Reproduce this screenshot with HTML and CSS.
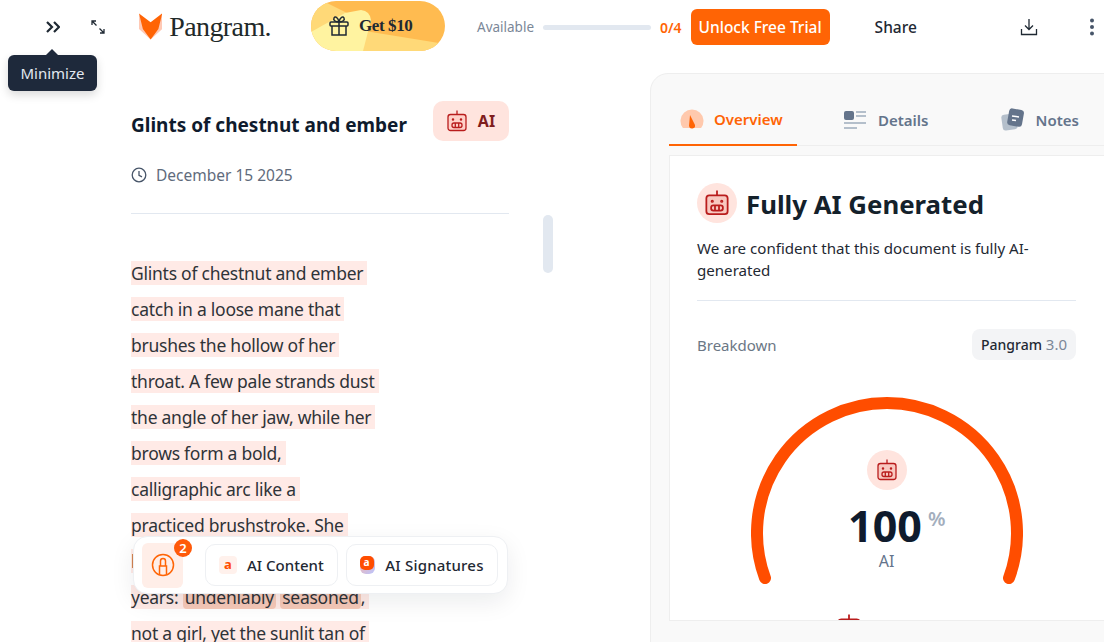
FILE: index.html
```html
<!DOCTYPE html>
<html lang="en">

<head>
    <meta charset="UTF-8">
    <meta name="viewport" content="width=device-width, initial-scale=1.0">
    <title>Pangram - Glints of chestnut and ember</title>
    <link rel="stylesheet" href="styles.css">
</head>

<body>

    <header class="topbar">
        <button class="icon-btn collapse" aria-label="Minimize">
            <svg width="14" height="12" viewBox="0 0 14 12" fill="none" stroke="#1f2933" stroke-width="2.2"><path d="M1 1l5 5-5 5M8 1l5 5-5 5"/></svg>
        </button>
        <button class="icon-btn expand" aria-label="Expand">
            <svg width="14" height="14" viewBox="0 0 14 14" fill="none" stroke="#1f2933" stroke-width="1.3"><path d="M1 5V1h4M1 1l4.500 4.500M13 9v4H9M13 13L8.500 8.500"/></svg>
        </button>
        <div class="logo">
            <svg width="24" height="27" viewBox="0 0 24 27"><path fill="#ffc9b5" d="M0 1l12 26L0 16zM24 1L12 27l12-11z"/><path fill="#ff6405" d="M0 0l12 9 12-9-4 16-8 11-8-11z"/></svg>
            <span class="logo-name">Pangram.</span>
        </div>
        <a class="promo">
            <svg class="promo-bg" width="134" height="50" viewBox="0 0 134 50"><rect width="134" height="50" fill="#ffbb50"/><path fill="#ffd978" d="M0 0h12l24 12L0 32z"/><path fill="#ffd978" d="M54 30l80 13v7H50z"/><path fill="#fff3a0" d="M0 31l34-19 16-3q9 1 10 10l-8 31H0z"/></svg>
            <svg class="promo-gift" width="20" height="20" viewBox="0 0 20 20" fill="none" stroke="#1f2933" stroke-width="1.500"><rect x="1" y="6" width="18" height="4" rx="1"/><path d="M3 10v9h14v-9M10 6v13M10 6C6 6 4 4 5 2s4-1 5 4c1-5 4-6 5-4s-1 4-5 4"/></svg>
            <span>Get $10</span>
        </a>
        <span class="avail-label">Available</span>
        <span class="avail-bar"></span>
        <span class="avail-count">0/4</span>
        <button class="unlock">Unlock Free Trial</button>
        <button class="share">Share</button>
        <button class="icon-btn download" aria-label="Download">
            <svg width="18" height="18" viewBox="0 0 18 18" fill="none" stroke="#1f2933" stroke-width="1.300"><path d="M9 1v10M5 7.500L9 11.500l4-4M1.500 11v5.500h15V11"/></svg>
        </button>
        <button class="icon-btn more" aria-label="More">
            <svg width="6" height="18" viewBox="0 0 6 18" fill="#475569"><circle cx="3" cy="2.500" r="2"/><circle cx="3" cy="9" r="2"/><circle cx="3" cy="15.500" r="2"/></svg>
        </button>
    </header>

    <div class="tooltip">Minimize</div>

    <main class="content">
        <section class="doc">
            <div class="doc-head">
                <h1>Glints of chestnut and ember</h1>
                <span class="ai-chip">
                    <svg width="20" height="22" viewBox="0 0 20 22" fill="#ffd0c8" stroke="#b91c1c" stroke-width="1.300"><use href="#robot"/></svg>
                    AI
                </span>
            </div>
            <p class="doc-date">
                <svg width="16" height="16" viewBox="0 0 16 16" fill="none" stroke="#475569" stroke-width="1.300"><circle cx="8" cy="8" r="6.800"/><path d="M8 4v4.300l3 1.500"/></svg>
                December 15 2025
            </p>
            <hr class="rule">
            <div class="doc-text">
                <div><span class="hl">Glints of chestnut and ember</span></div>
                <div><span class="hl">catch in a loose mane that</span></div>
                <div><span class="hl">brushes the hollow of her</span></div>
                <div><span class="hl">throat. A few pale strands dust</span></div>
                <div><span class="hl">the angle of her jaw, while her</span></div>
                <div><span class="hl">brows form a bold,</span></div>
                <div><span class="hl">calligraphic arc like a</span></div>
                <div><span class="hl">practiced brushstroke. She</span></div>
                <div><span class="hl">looks lived in, her</span></div>
                <div><span class="hl">years: <mark>undeniably</mark> <mark>seasoned</mark>,</span></div>
                <div><span class="hl">not a girl, yet the sunlit tan of</span></div>
            </div>
        </section>

        <div class="doc-scroll"><span></span></div>

        <aside class="panel">
            <nav class="tabs">
                <a class="tab active">
                    <svg width="24" height="20" viewBox="0 0 24 20"><path fill="#ffc9ad" d="M2.900 19A11.500 11.500 0 1 1 21.100 19z"/><path fill="#ff6405" d="M10 6l5 10a3 3 0 1 1-6 1z"/></svg>
                    Overview
                </a>
                <a class="tab details">
                    <svg width="24" height="20" viewBox="0 0 24 20"><rect x="1" y="1" width="10" height="9" rx="2" fill="#64748b"/><path stroke="#b4bfcb" stroke-width="2" d="M13 2h10M13 6h10M1 13h22M1 18h13"/></svg>
                    Details
                </a>
                <a class="tab notes">
                    <svg width="24" height="24" viewBox="0 0 24 24"><rect x="1" y="6" width="15" height="16" rx="3" fill="#b4bfcb" transform="rotate(-8 8 14)"/><rect x="7" y="1" width="15" height="17" rx="3" fill="#64748b" transform="rotate(10 14 10)"/><path stroke="#fff" stroke-width="1.500" d="M11 8l7 1M11 12l4 .5"/></svg>
                    Notes
                </a>
            </nav>
            <div class="card">
                <div class="verdict">
                    <span class="robot-dot">
                        <svg width="24" height="26" viewBox="0 0 20 22" fill="#f8c8c0" stroke="#b91c1c" stroke-width="1.500"><use href="#robot"/></svg>
                    </span>
                    <h2>Fully AI Generated</h2>
                </div>
                <p class="verdict-text">We are confident that this document is fully AI-generated</p>
                <hr class="rule">
                <div class="breakdown">
                    <span>Breakdown</span>
                    <span class="model"><b>Pangram</b> 3.0</span>
                </div>
                <div class="gauge">
                    <svg class="gauge-arc" width="272" height="200" viewBox="0 0 272 200" fill="none"><path d="M14 182A130 130 0 1 1 258 182" stroke="#ff4d00" stroke-width="12" stroke-linecap="round"/></svg>
                    <span class="robot-dot">
                        <svg width="20" height="22" viewBox="0 0 20 22" fill="#f8c8c0" stroke="#b91c1c" stroke-width="1.300"><use href="#robot"/></svg>
                    </span>
                    <div class="gauge-num">100<sup>%</sup></div>
                    <div class="gauge-label">AI</div>
                </div>
                <div class="next-row">
                    <svg width="24" height="26" viewBox="0 0 20 22" fill="#f8c8c0" stroke="#b91c1c" stroke-width="1.500"><use href="#robot"/></svg>
                </div>
            </div>
        </aside>
    </main>

    <div class="floatbar">
        <button class="float-icon">
            <svg width="24" height="24" viewBox="0 0 24 24" fill="none" stroke="#ff6405" stroke-width="1.500"><circle cx="12" cy="12" r="10.500"/><path d="M8.500 21.500V13h7v8.500M9.500 13V8a2.500 2.500 0 0 1 5 0v5"/></svg>
            <span class="badge">2</span>
        </button>
        <button class="float-btn">
            <span class="a-mark">a</span>
            AI Content
        </button>
        <button class="float-btn signatures">
            <span class="a-stack"><span>a</span></span>
            AI Signatures
        </button>
    </div>

    <svg class="defs" width="0" height="0">
        <defs>
            <g id="robot">
                <rect x="1" y="4.500" width="18" height="16" rx="2.500"/>
                <path d="M10 0.500v4"/>
                <rect x="5" y="13" width="10" height="4.500" rx="2" fill="none"/>
                <path d="M8.300 13v4.500M11.700 13v4.500"/>
                <circle cx="6" cy="9.500" r=".6"/>
                <circle cx="14" cy="9.500" r=".6"/>
            </g>
        </defs>
    </svg>

</body>

</html>
```

FILE: styles.css
```css
* {
    box-sizing: border-box;
}

html,
body {
    margin: 0;
    height: 642px;
    overflow: hidden;
}

body {
    position: relative;
    display: flex;
    flex-direction: column;
    background: white;
    color: #1f2933;
    font-family: 'Noto Sans', sans-serif;
}

button {
    padding: 0;
    border: none;
    background: none;
    font-family: inherit;
    cursor: pointer;
}

.defs {
    position: absolute;
}

/* top bar */
.topbar {
    flex: none;
    display: flex;
    align-items: center;
    height: 54px;
    padding-left: 46px;
}

.icon-btn {
    display: flex;
    align-items: center;
}

.expand {
    margin-left: 31px;
}

.logo {
    display: flex;
    align-items: center;
    gap: 7px;
    width: 132px;
    margin-left: 34px;
    margin-top: -1px;
}

.logo-name {
    font-family: 'Liberation Serif', serif;
    font-size: 28px;
    letter-spacing: -0.6px;
    color: #1f2a2a;
}

.promo {
    position: relative;
    overflow: hidden;
    display: flex;
    align-items: center;
    gap: 10px;
    width: 134px;
    height: 50px;
    margin-left: 40px;
    margin-top: -2px;
    padding-left: 18px;
    border-radius: 25px;
    font-family: 'Liberation Serif', serif;
    font-size: 17px;
    font-weight: bold;
    letter-spacing: -0.4px;
}

.promo-bg {
    position: absolute;
    left: 0;
    top: 0;
}

.promo-gift,
.promo span {
    position: relative;
}

.avail-label {
    width: 57px;
    margin-left: 32px;
    font-size: 13.500px;
    color: #7b8798;
}

.avail-bar {
    width: 108px;
    height: 5px;
    margin-left: 9px;
    border-radius: 3px;
    background: #e2e8f0;
}

.avail-count {
    margin-left: 9px;
    font-size: 14px;
    font-weight: 600;
    color: #ff6405;
}

.unlock {
    width: 139px;
    height: 36px;
    margin-left: 9px;
    border-radius: 6px;
    background: #ff6405;
    color: white;
    font-size: 15.500px;
    font-weight: 500;
}

.share {
    width: 42px;
    margin-left: 45px;
    font-size: 15.500px;
    font-weight: 500;
    color: #1f2933;
}

.download {
    margin-left: 103px;
}

.more {
    margin-left: 51px;
}

.tooltip {
    position: absolute;
    left: 8px;
    top: 55px;
    width: 89px;
    height: 36px;
    border-radius: 6px;
    background: #1e293b;
    color: #e2e8f0;
    font-size: 15px;
    line-height: 36px;
    text-align: center;
    box-shadow: 0 4px 10px rgba(0, 0, 0, 0.15);
}

.tooltip::before {
    content: '';
    position: absolute;
    left: 38px;
    top: -6px;
    border: 6px solid transparent;
    border-top: none;
    border-bottom-color: #1e293b;
}

/* document column */
.content {
    flex: 1;
    display: flex;
    min-height: 0;
}

.doc {
    flex: none;
    width: 378px;
    margin-left: 131px;
}

.doc-head {
    display: flex;
    justify-content: space-between;
    align-items: center;
    height: 40px;
    margin-top: 47px;
}

h1 {
    margin: 7px 0 0;
    font-size: 19px;
    font-weight: 700;
    color: #0f1b2d;
}

.ai-chip {
    display: flex;
    align-items: center;
    justify-content: center;
    gap: 11px;
    width: 76px;
    height: 40px;
    border-radius: 10px;
    background: #ffe4de;
    color: #7f1d1d;
    font-size: 16px;
    font-weight: 700;
}

.doc-date {
    display: flex;
    align-items: center;
    gap: 9px;
    margin: 24px 0 0;
    font-size: 15.500px;
    line-height: 20px;
    color: #5f6b7c;
}

.rule {
    height: 1px;
    margin: 0;
    border: none;
    background: #e2e8f0;
}

.doc .rule {
    margin-top: 28px;
}

.doc-text {
    margin-top: 47px;
    font-size: 17.500px;
    letter-spacing: -0.25px;
    color: #2f3338;
}

.doc-text div {
    height: 36px;
}

.hl {
    display: inline-block;
    height: 24px;
    padding-right: 4px;
    background: #ffeae6;
    line-height: 24px;
}

mark {
    padding: 0 2px;
    border-radius: 4px;
    background: #f6c9b8;
    color: inherit;
}

.doc-scroll {
    flex: none;
    width: 10px;
    margin-left: 34px;
    padding-top: 161px;
}

.doc-scroll span {
    display: block;
    height: 58px;
    border-radius: 5px;
    background: #e2e8f0;
}

/* right panel */
.panel {
    flex: none;
    width: 470px;
    height: 600px;
    margin-left: 97px;
    margin-top: 19px;
    padding-top: 21px;
    padding-left: 18px;
    border: 1px solid #eeeeee;
    border-radius: 18px 0 0 18px;
    background: #f9f9f9;
}

.tabs {
    display: flex;
    height: 51px;
    border-bottom: 1px solid #eeeeee;
}

.tab {
    display: flex;
    align-items: center;
    gap: 11px;
    height: 51px;
    padding-bottom: 2px;
    font-size: 15px;
    font-weight: 600;
    color: #64748b;
}

.tab.active {
    gap: 10px;
    width: 128px;
    padding-left: 11px;
    border-bottom: 2px solid #ff6405;
    color: #ff6405;
}

.tab.details {
    margin-left: 46px;
}

.tab.notes {
    margin-left: 72px;
}

.card {
    height: 466px;
    margin-top: 9px;
    padding: 27px 28px 0 27px;
    overflow: hidden;
    border: 1px solid #eeeeee;
    background: white;
}

.card > * {
    width: 379px;
}

.verdict {
    display: flex;
    align-items: center;
    gap: 9px;
}

.robot-dot {
    display: flex;
    align-items: center;
    justify-content: center;
    width: 40px;
    height: 40px;
    border-radius: 50%;
    background: #ffe4de;
}

h2 {
    margin: 2px 0 0;
    font-size: 25.800px;
    font-weight: 700;
    color: #14212b;
}

.verdict-text {
    margin: 14px 0 0;
    font-size: 15.100px;
    line-height: 22px;
    color: #1f2933;
}

.card .rule {
    margin-top: 19px;
}

.breakdown {
    display: flex;
    justify-content: space-between;
    align-items: center;
    margin-top: 28px;
    font-size: 15px;
    color: #6b7785;
}

.model {
    padding: 0 9px;
    height: 31px;
    border-radius: 8px;
    background: #f3f4f6;
    line-height: 31px;
    color: #7b8798;
}

.model b {
    font-size: 14px;
    font-weight: 500;
    color: #1f2933;
}

.gauge {
    position: relative;
    display: flex;
    flex-direction: column;
    align-items: center;
    height: 218px;
    margin-top: 36px;
    padding-top: 54px;
}

.gauge-arc {
    position: absolute;
    left: 54px;
    top: 0;
}

.gauge-num {
    position: relative;
    margin-top: 9px;
    margin-left: -3px;
    font-size: 43px;
    font-weight: 700;
    line-height: 54px;
    color: #0f1b2d;
}

.gauge-num sup {
    position: absolute;
    left: 100%;
    top: 8px;
    margin-left: 6px;
    font-size: 20px;
    font-weight: 600;
    line-height: 24px;
    color: #a3aebd;
}

.gauge-label {
    margin-top: -3px;
    font-size: 16px;
    color: #64748b;
}

.next-row {
    padding-left: 140px;
}

/* floating toolbar */
.floatbar {
    position: absolute;
    left: 133px;
    top: 536px;
    display: flex;
    align-items: center;
    width: 375px;
    height: 58px;
    padding-left: 8px;
    border: 1px solid #eef0f3;
    border-radius: 14px;
    background: white;
    box-shadow: 0 8px 24px rgba(15, 23, 42, 0.08);
}

.float-icon {
    position: relative;
    display: flex;
    align-items: center;
    justify-content: center;
    width: 41px;
    height: 45px;
    margin-right: 22px;
    border-radius: 6px;
    background: #ffeee8;
}

.badge {
    position: absolute;
    right: -9px;
    top: -4px;
    width: 18px;
    height: 18px;
    border-radius: 50%;
    background: #ff5a0a;
    color: white;
    font-size: 13px;
    font-weight: 600;
    line-height: 18px;
    text-align: center;
}

.float-btn {
    display: flex;
    align-items: center;
    gap: 10px;
    height: 42px;
    margin-right: 8px;
    padding: 0 13px;
    border: 1px solid #eef0f3;
    border-radius: 10px;
    background: white;
    color: #1f2933;
    font-size: 15px;
    font-weight: 500;
    white-space: nowrap;
}

.signatures {
    width: 152px;
    letter-spacing: 0.2px;
}

.a-mark {
    width: 18px;
    height: 18px;
    border-radius: 4px;
    background: #fff1ec;
    color: #ff4d00;
    font-size: 13px;
    font-weight: 700;
    line-height: 17px;
    text-align: center;
}

.a-stack {
    width: 17px;
    height: 18px;
    border-radius: 6px;
    background: linear-gradient(135deg, #ffb3a0, #b9c4ff);
}

.a-stack span {
    display: block;
    width: 14px;
    height: 14px;
    border-radius: 5px;
    background: #ff4d00;
    color: white;
    font-size: 10px;
    font-weight: 700;
    line-height: 13px;
    text-align: center;
}
```
